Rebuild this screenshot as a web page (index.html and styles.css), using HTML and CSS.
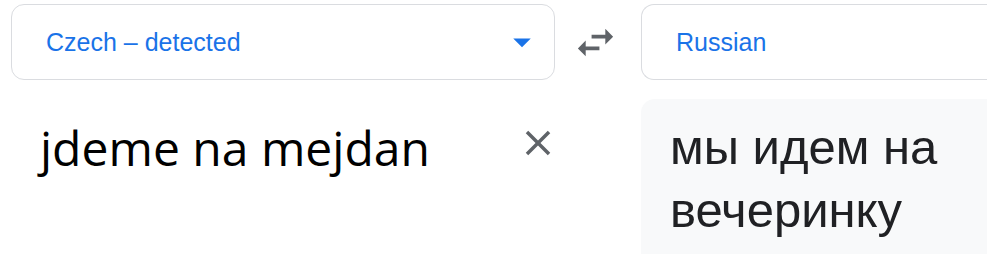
FILE: index.html
```html
<!DOCTYPE html>
<html>
<head>
<meta charset="utf-8">
<link rel="stylesheet" href="styles.css">
</head>
<body>
<div class="page">
  <div class="row top">
    <div class="lang-box src">
      <span class="lang-label">Czech – detected</span>
      <svg class="drop" viewBox="0 0 24 24"><path d="M7 10l5 5 5-5z"/></svg>
    </div>
    <div class="swap">
      <svg viewBox="0 0 24 24"><path d="M6.99 11L3 15l3.99 4v-3H14v-2H6.99v-3zM21 9l-3.99-4v3H10v2h7.01v3L21 9z"/></svg>
    </div>
    <div class="lang-box tgt">
      <span class="lang-label">Russian</span>
    </div>
  </div>
  <div class="row bottom">
    <div class="source">
      <div class="source-text">jdeme na mejdan</div>
      <svg class="clear" viewBox="0 0 24 24"><path d="M19 6.41L17.59 5 12 10.59 6.41 5 5 6.41 10.59 12 5 17.59 6.41 19 12 13.41 17.59 19 19 17.59 13.41 12z"/></svg>
    </div>
    <div class="target">
      <div class="target-text">мы идем на вечеринку</div>
    </div>
  </div>
</div>
</body>
</html>
```

FILE: styles.css
```css
html, body {
  margin: 0;
  padding: 0;
  background: #ffffff;
  overflow: hidden;
}

.page {
  width: 987px;
  height: 254px;
  box-sizing: border-box;
  padding: 4px 0 0 11px;
  overflow: hidden;
  font-family: "Liberation Sans", Arial, sans-serif;
}

.row {
  display: flex;
}

.lang-box {
  box-sizing: border-box;
  height: 76px;
  border: 1px solid #dadce0;
  border-radius: 13px;
  display: flex;
  align-items: center;
}

.lang-box.src {
  width: 544px;
  padding-left: 34px;
  padding-right: 11px;
  justify-content: space-between;
}

.lang-box.tgt {
  flex: 1;
  border-right: none;
  border-radius: 13px 0 0 13px;
  padding-left: 34px;
}

.lang-label {
  color: #1a73e8;
  font-size: 25px;
  line-height: 28px;
}

.drop {
  width: 42px;
  height: 42px;
  fill: #1a73e8;
}

.swap {
  width: 86px;
  display: flex;
  align-items: center;
  justify-content: center;
}

.swap svg {
  width: 47px;
  height: 47px;
  fill: #5f6368;
  margin-left: -5px;
}

.bottom {
  margin-top: 19px;
}

.source {
  width: 543px;
  box-sizing: border-box;
  display: flex;
  justify-content: space-between;
  align-items: flex-start;
  padding: 17px 0 0 29px;
}

.source-text {
  font-family: "Open Sans", sans-serif;
  font-size: 48px;
  line-height: 63px;
  color: #000000;
}

.clear {
  width: 42px;
  height: 42px;
  fill: #5f6368;
  margin-top: 6px;
  margin-right: -5px;
}

.target {
  margin-left: 87px;
  flex: 1;
  height: 155px;
  background: #f8f9fa;
  border-top-left-radius: 14px;
  box-sizing: border-box;
  padding: 17px 0 0 29px;
}

.target-text {
  width: 300px;
  font-size: 49px;
  line-height: 63px;
  color: #202124;
}
```
